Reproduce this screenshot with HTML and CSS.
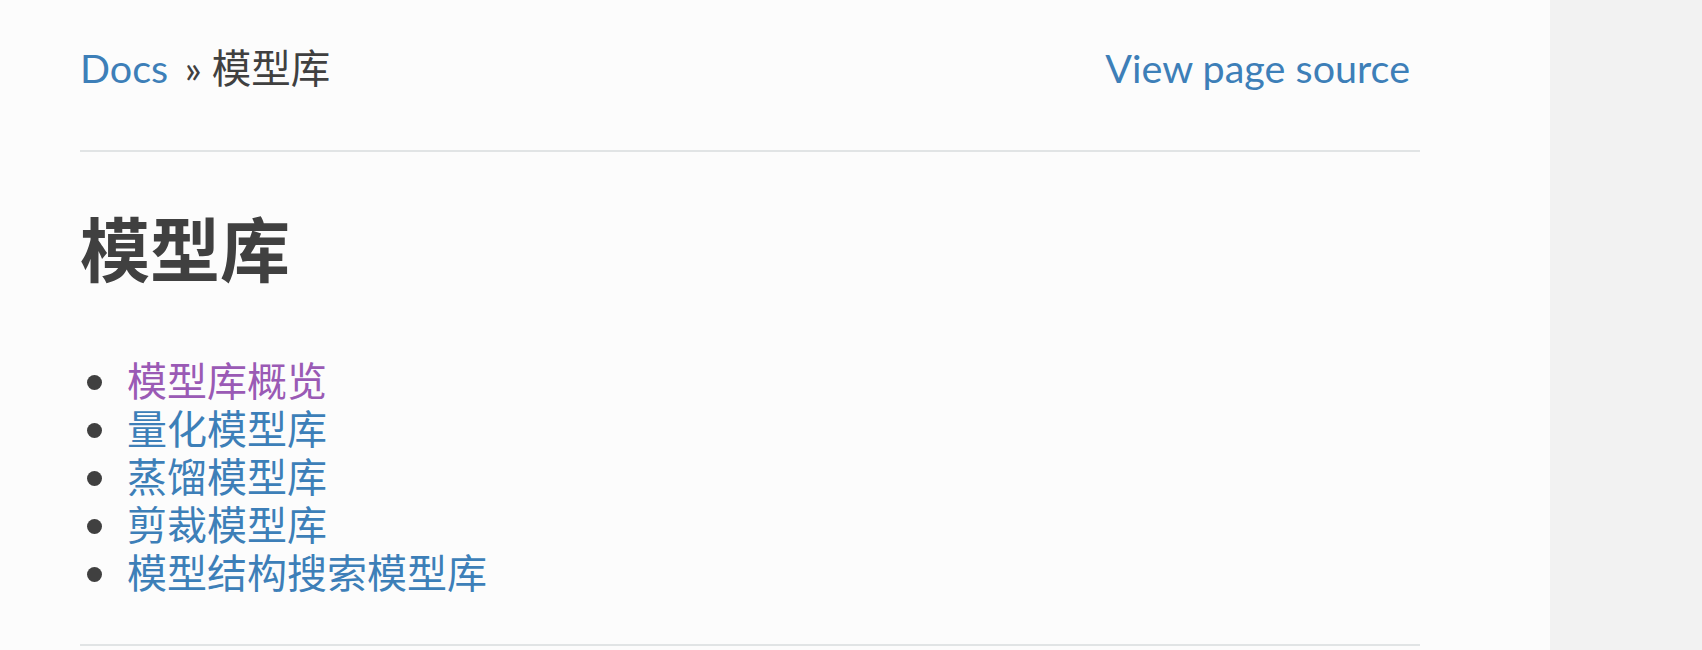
FILE: index.html
```html
<!DOCTYPE html>
<html lang="zh">
<head>
<meta charset="utf-8">
<title>模型库</title>
<link rel="stylesheet" href="styles.css">
</head>
<body>
<div class="page">
  <div class="breadcrumbs">
    <div class="crumbs"><a class="link home" href="#">Docs</a> <span class="sep">»</span> 模型库</div>
    <a class="link source" href="#">View page source</a>
  </div>
  <hr class="rule">
  <h1 class="title">模型库</h1>
  <ul class="toc">
    <li class="toc-item"><a class="link visited" href="#">模型库概览</a></li>
    <li class="toc-item"><a class="link" href="#">量化模型库</a></li>
    <li class="toc-item"><a class="link" href="#">蒸馏模型库</a></li>
    <li class="toc-item"><a class="link" href="#">剪裁模型库</a></li>
    <li class="toc-item"><a class="link" href="#">模型结构搜索模型库</a></li>
  </ul>
  <hr class="rule bottom">
</div>
</body>
</html>
```

FILE: styles.css
```css
html, body {
  margin: 0;
  padding: 0;
}
body {
  background: #f2f2f2;
  color: #404040;
  font-family: Lato, "Noto Sans CJK SC", sans-serif;
}
.page {
  width: 1550px;
  min-height: 650px;
  box-sizing: border-box;
  background: #fcfcfc;
  padding: 38px 130px 0 80px;
}
.breadcrumbs {
  display: flex;
  justify-content: space-between;
  align-items: baseline;
  font-size: 39.5px;
  line-height: 60px;
}
.crumbs {
  white-space: nowrap;
}
.home {
  padding-right: 6.5px;
}
.link {
  color: #3d7fb8;
  text-decoration: none;
}
.link.visited {
  color: #9a5ab5;
}
.source {
  margin-right: 10px;
}
.rule {
  border: 0;
  border-top: 2px solid #e1e4e5;
  margin: 52px 0 0 0;
  height: 0;
}
.title {
  margin: 53px 0 0 0;
  font-family: "Noto Sans CJK SC", sans-serif;
  font-size: 70px;
  font-weight: 700;
  line-height: 84px;
  color: #404040;
}
.toc {
  list-style: none;
  margin: 68px 0 0 0;
  padding: 0;
  font-size: 40px;
  line-height: 48px;
}
.toc-item {
  display: flex;
  align-items: center;
}
.toc-item::before {
  content: "";
  width: 15px;
  height: 15px;
  border-radius: 50%;
  background: #404040;
  margin: 2px 25px 0 7px;
  flex: none;
}
.rule.bottom {
  margin-top: 47px;
}
```
